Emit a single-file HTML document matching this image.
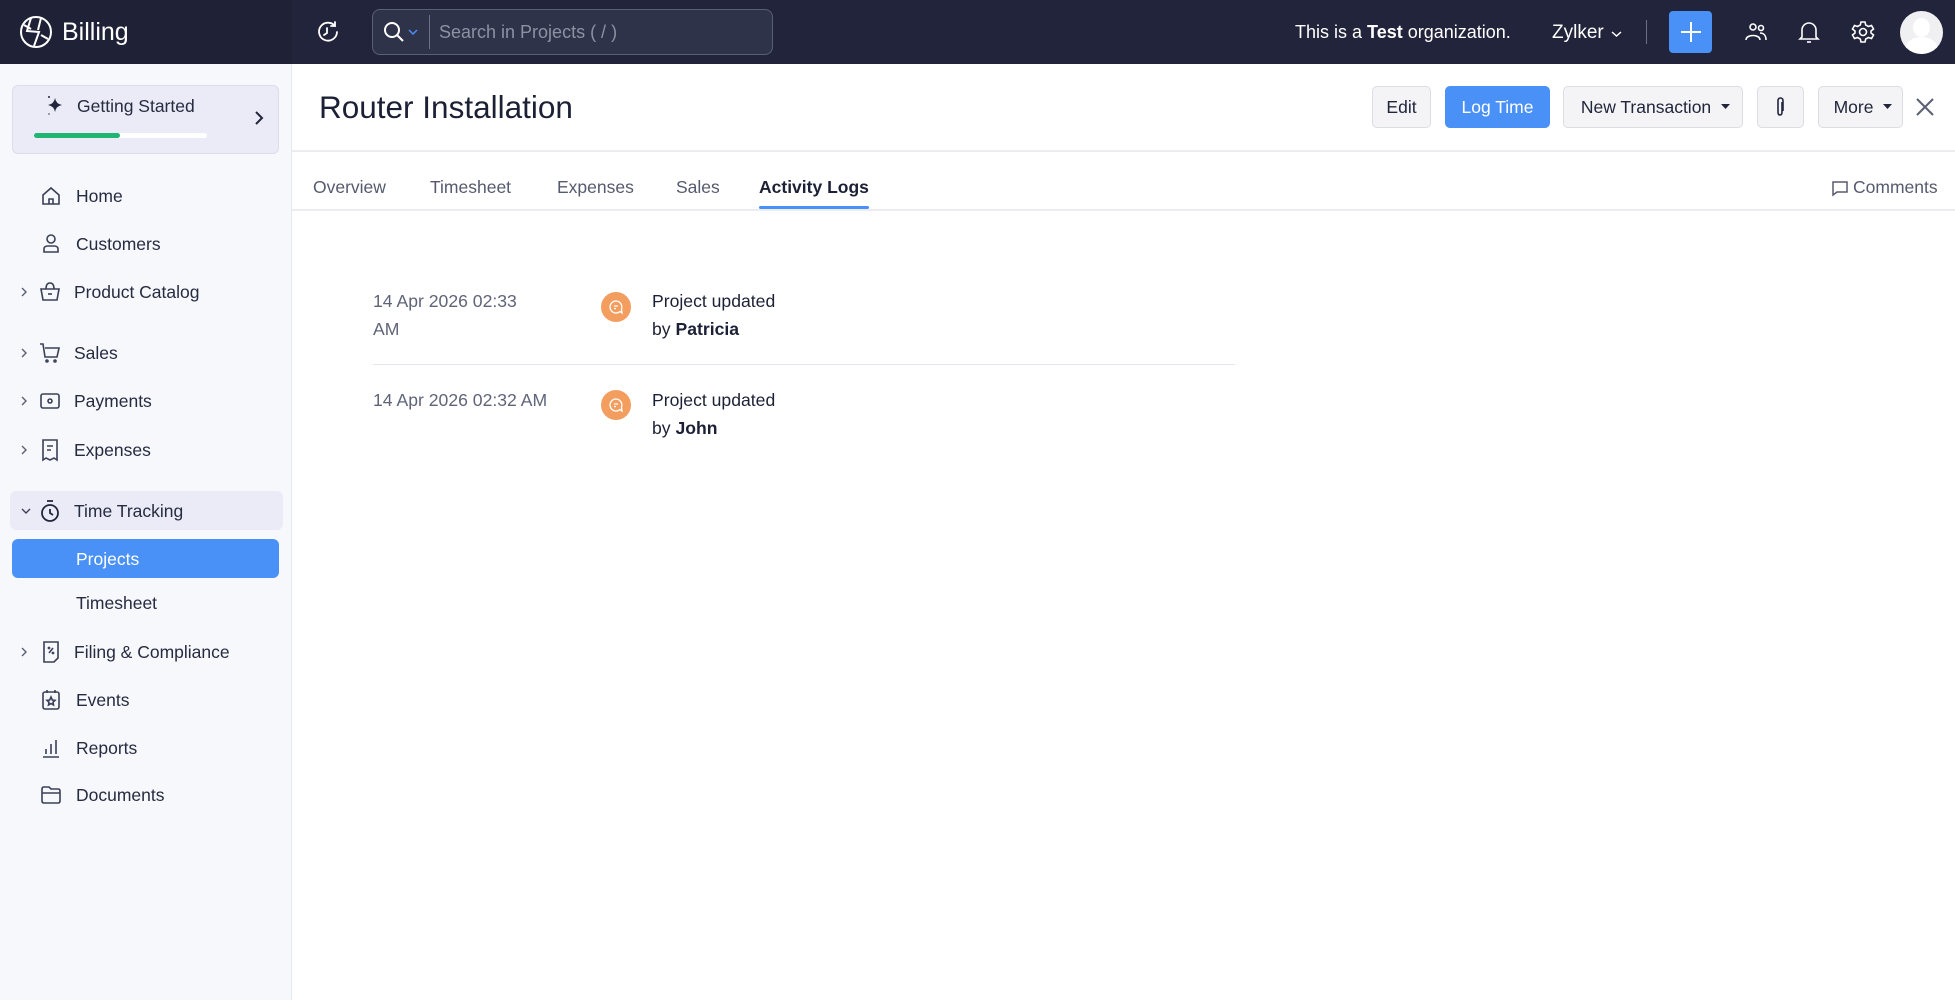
<!DOCTYPE html>
<html><head><meta charset="utf-8">
<style>
*{box-sizing:border-box;margin:0;padding:0}
body{width:1955px;height:1000px;overflow:hidden;background:#fff;font-family:"Liberation Sans",Arial,sans-serif;color:#21263c;position:relative}
.a{position:absolute}
.top{left:0;top:0;width:1955px;height:64px;background:#21243a}
.sbtop{left:0;top:0;width:292px;height:64px;background:#1f2236}
.side{left:0;top:64px;width:292px;height:936px;background:#f7f8fc;border-right:1px solid #e6e8f0}
.nav{position:absolute;left:0;font-size:17.5px;color:#262b40;line-height:24px}
.nav .t{position:absolute;left:76px;top:0;white-space:nowrap}
.nav svg{position:absolute}
.chev{position:absolute;left:20px;top:6px}
.btn{position:absolute;top:86px;height:42px;border:1px solid #dcdde3;background:#f4f4f6;border-radius:5px;font-size:17.5px;line-height:40px;text-align:center;color:#21263c}
.tab{position:absolute;top:177px;font-size:17.5px;color:#555a6e}
.row{font-size:17.6px;line-height:28px}
</style></head><body>
<div class="a top"></div>
<div class="a sbtop"></div>
<svg class="a" style="left:19px;top:15px" width="34" height="34" viewBox="0 0 34 34" fill="none" stroke="#fff" stroke-width="2"><circle cx="17" cy="17" r="15"/><path d="M12 3 L8 16 L20 17 L15 31"/><path d="M22 3 L19 15"/><path d="M5 10 L12 14"/><path d="M22 20 L29 24"/></svg>
<div class="a" style="left:62px;top:18px;color:#fff;font-size:25px">Billing</div>
<svg class="a" style="left:316px;top:20px" width="24" height="24" viewBox="0 0 24 24" fill="none" stroke="#fff" stroke-width="1.8" stroke-linecap="round"><path d="M19 6 A9 9 0 1 0 21 12"/><path d="M19 2 V6 H15"/><path d="M11 8 V13 L8 15"/></svg>
<div class="a" style="left:372px;top:9px;width:401px;height:46px;border:1px solid #5a5f78;border-radius:8px;background:#2f3349"></div>
<svg class="a" style="left:382px;top:20px" width="24" height="24" viewBox="0 0 24 24" fill="none" stroke="#fff" stroke-width="2"><circle cx="10" cy="10" r="7"/><path d="M15 15 L21 21"/></svg>
<svg class="a" style="left:408px;top:28px" width="10" height="8" viewBox="0 0 10 8" fill="none" stroke="#4b8df8" stroke-width="1.5"><path d="M1 2 L5 6 L9 2"/></svg>
<div class="a" style="left:429px;top:15px;width:1px;height:34px;background:#6b7088"></div>
<div class="a" style="left:439px;top:22px;color:#8d91a4;font-size:18px">Search in Projects ( / )</div>
<div class="a" style="left:1295px;top:22px;color:#fff;font-size:18px">This is a <b>Test</b> organization.</div>
<div class="a" style="left:1552px;top:22px;color:#fff;font-size:19px">Zylker</div>
<svg class="a" style="left:1611px;top:30px" width="11" height="8" viewBox="0 0 11 8" fill="none" stroke="#fff" stroke-width="1.5"><path d="M1 2 L5.5 6 L10 2"/></svg>
<div class="a" style="left:1646px;top:20px;width:1px;height:24px;background:#6b7088"></div>
<div class="a" style="left:1669px;top:11px;width:43px;height:42px;background:#4990f7;border-radius:4px"></div>
<svg class="a" style="left:1679px;top:20px" width="24" height="24" viewBox="0 0 24 24" stroke="#fff" stroke-width="2"><path d="M12 2 V22 M2 12 H22"/></svg>
<svg class="a" style="left:1744px;top:20px" width="24" height="24" viewBox="0 0 24 24" fill="none" stroke="#fff" stroke-width="1.6"><circle cx="9" cy="7" r="3"/><circle cx="17" cy="8" r="2.5"/><path d="M2 20 C2 14 16 14 16 20"/><path d="M16 13 C20 13 22 16 22 20"/></svg>
<svg class="a" style="left:1797px;top:19px" width="24" height="26" viewBox="0 0 24 26" fill="none" stroke="#fff" stroke-width="1.6"><path d="M5 18 V11 A7 7 0 0 1 19 11 V18 L21 20 H3 Z"/><path d="M10 23 H14"/></svg>
<svg class="a" style="left:1851px;top:20px" width="24" height="24" viewBox="0 0 24 24" fill="none" stroke="#fff" stroke-width="1.6"><circle cx="12" cy="12" r="3.5"/><path d="M10 2 H14 L14.7 5 L17.5 6.5 L20.5 5.5 L22.5 9 L20 11 V13 L22.5 15 L20.5 18.5 L17.5 17.5 L14.7 19 L14 22 H10 L9.3 19 L6.5 17.5 L3.5 18.5 L1.5 15 L4 13 V11 L1.5 9 L3.5 5.5 L6.5 6.5 L9.3 5 Z"/></svg>
<div class="a" style="left:1900px;top:11px;width:43px;height:43px;border-radius:50%;background:#f0f0f3;overflow:hidden"><div class="a" style="left:13px;top:7px;width:17px;height:19px;border-radius:50%;background:#fff"></div><div class="a" style="left:5px;top:26px;width:33px;height:24px;border-radius:50% 50% 0 0;background:#fff"></div></div>

<div class="a side"></div>
<div class="a" style="left:12px;top:85px;width:267px;height:69px;background:#ebebf7;border:1px solid #dcdcea;border-radius:6px"></div>
<svg class="a" style="left:42px;top:93px" width="24" height="24" viewBox="0 0 24 24" fill="#21263c"><path d="M13 5 Q14 11 20 12 Q14 13 13 19 Q12 13 6 12 Q12 11 13 5Z"/><circle cx="7" cy="4" r="1"/><circle cx="7" cy="21" r=".7"/></svg>
<div class="a" style="left:77px;top:96px;font-size:17.5px;color:#262b40">Getting Started</div>
<svg class="a" style="left:254px;top:110px" width="10" height="16" viewBox="0 0 10 16" fill="none" stroke="#21263c" stroke-width="2"><path d="M2 2 L8 8 L2 14"/></svg>
<div class="a" style="left:34px;top:133px;width:173px;height:5px;background:#fff;border-radius:3px"></div>
<div class="a" style="left:34px;top:133px;width:86px;height:5px;background:#21b573;border-radius:3px"></div>

<div class="a" style="left:10px;top:491px;width:273px;height:39px;background:#ebebf7;border-radius:6px"></div>
<div class="a" style="left:12px;top:539px;width:267px;height:39px;background:#4990f7;border-radius:6px"></div>

<div class="nav" style="top:184px"><svg style="left:40px;top:1px" width="22" height="22" viewBox="0 0 22 22" fill="none" stroke="#3b4058" stroke-width="1.6"><path d="M3 10 L11 3 L19 10 V19 H3 Z"/><path d="M9 19 V14 H13 V19"/></svg><span class="t">Home</span></div>
<div class="nav" style="top:232px"><svg style="left:40px;top:1px" width="22" height="22" viewBox="0 0 22 22" fill="none" stroke="#3b4058" stroke-width="1.6"><circle cx="11" cy="6" r="4"/><path d="M4 19 V16 Q4 13 8 13 H14 Q18 13 18 16 V19 Z"/></svg><span class="t">Customers</span></div>
<div class="nav" style="top:280px"><svg class="chev" width="8" height="12" viewBox="0 0 8 12" fill="none" stroke="#5a5f73" stroke-width="1.4"><path d="M2 2 L6 6 L2 10"/></svg><svg style="left:38px;top:1px" width="24" height="22" viewBox="0 0 24 22" fill="none" stroke="#3b4058" stroke-width="1.6"><path d="M3 8 H21 L19 19 H5 Z"/><path d="M8 8 Q8 2 12 2 Q16 2 16 8"/><path d="M10 13 H14"/></svg><span class="t" style="left:74px">Product Catalog</span></div>
<div class="nav" style="top:341px"><svg class="chev" width="8" height="12" viewBox="0 0 8 12" fill="none" stroke="#5a5f73" stroke-width="1.4"><path d="M2 2 L6 6 L2 10"/></svg><svg style="left:38px;top:0px" width="24" height="24" viewBox="0 0 24 24" fill="none" stroke="#3b4058" stroke-width="1.6"><path d="M2 3 H5 L7 16 H19 L21 7 H7"/><circle cx="9" cy="20" r="1"/><circle cx="17" cy="20" r="1"/></svg><span class="t" style="left:74px">Sales</span></div>
<div class="nav" style="top:389px"><svg class="chev" width="8" height="12" viewBox="0 0 8 12" fill="none" stroke="#5a5f73" stroke-width="1.4"><path d="M2 2 L6 6 L2 10"/></svg><svg style="left:38px;top:1px" width="24" height="22" viewBox="0 0 24 22" fill="none" stroke="#3b4058" stroke-width="1.6"><rect x="3" y="4" width="18" height="14" rx="2"/><circle cx="12" cy="11" r="2"/></svg><span class="t" style="left:74px">Payments</span></div>
<div class="nav" style="top:438px"><svg class="chev" width="8" height="12" viewBox="0 0 8 12" fill="none" stroke="#5a5f73" stroke-width="1.4"><path d="M2 2 L6 6 L2 10"/></svg><svg style="left:39px;top:0px" width="22" height="24" viewBox="0 0 22 24" fill="none" stroke="#3b4058" stroke-width="1.6"><path d="M4 2 H18 V22 L15 20 L11 22 L7 20 L4 22 Z"/><path d="M8 8 H14 M8 12 H12"/></svg><span class="t" style="left:74px">Expenses</span></div>
<div class="nav" style="top:499px"><svg class="chev" style="top:8px" width="12" height="8" viewBox="0 0 12 8" fill="none" stroke="#3b4058" stroke-width="1.4"><path d="M2 2 L6 6 L10 2"/></svg><svg style="left:38px;top:0px" width="24" height="24" viewBox="0 0 24 24" fill="none" stroke="#21263c" stroke-width="1.8"><circle cx="12" cy="14" r="8"/><path d="M9 2 H15 M12 10 V14 L15 16"/></svg><span class="t" style="left:74px">Time Tracking</span></div>
<div class="nav" style="top:547px;color:#fff"><span class="t">Projects</span></div>
<div class="nav" style="top:591px"><span class="t">Timesheet</span></div>
<div class="nav" style="top:640px"><svg class="chev" width="8" height="12" viewBox="0 0 8 12" fill="none" stroke="#5a5f73" stroke-width="1.4"><path d="M2 2 L6 6 L2 10"/></svg><svg style="left:40px;top:0px" width="22" height="24" viewBox="0 0 22 24" fill="none" stroke="#3b4058" stroke-width="1.6"><path d="M4 2 H18 V18 L14 22 H4 Z"/><path d="M9 13 L13 8"/><circle cx="9" cy="8" r=".6"/><circle cx="13" cy="13" r=".6"/></svg><span class="t" style="left:74px">Filing &amp; Compliance</span></div>
<div class="nav" style="top:688px"><svg style="left:40px;top:0px" width="22" height="24" viewBox="0 0 22 24" fill="none" stroke="#3b4058" stroke-width="1.6"><rect x="3" y="4" width="16" height="17" rx="2"/><path d="M7 2 V5 M15 2 V5"/><path d="M11 9 L12.3 12 L15 12.3 L13 14.3 L13.5 17 L11 15.6 L8.5 17 L9 14.3 L7 12.3 L9.7 12 Z"/></svg><span class="t">Events</span></div>
<div class="nav" style="top:736px"><svg style="left:40px;top:0px" width="22" height="24" viewBox="0 0 22 24" fill="none" stroke="#3b4058" stroke-width="1.6"><path d="M3 21 H19 M6 18 V13 M11 18 V8 M16 18 V4"/></svg><span class="t">Reports</span></div>
<div class="nav" style="top:783px"><svg style="left:40px;top:1px" width="22" height="22" viewBox="0 0 22 22" fill="none" stroke="#3b4058" stroke-width="1.6"><path d="M2 5 Q2 3 4 3 H9 L11 5 H18 Q20 5 20 7 V17 Q20 19 18 19 H4 Q2 19 2 17 Z"/><path d="M2 9 H20"/></svg><span class="t">Documents</span></div>

<div class="a" style="left:319px;top:89px;font-size:31.5px;color:#1c2035">Router Installation</div>
<div class="btn" style="left:1372px;width:59px">Edit</div>
<div class="btn" style="left:1445px;width:105px;background:#4990f7;border-color:#4990f7;color:#fff">Log Time</div>
<div class="btn" style="left:1563px;width:180px;padding-right:14px">New Transaction</div>
<svg class="a" style="left:1721px;top:104px" width="9" height="6" viewBox="0 0 9 6"><path d="M0 0 H9 L4.5 5Z" fill="#21263c"/></svg>
<div class="btn" style="left:1757px;width:47px"></div>
<svg class="a" style="left:1774px;top:96px" width="12" height="22" viewBox="0 0 12 22" fill="none" stroke="#21263c" stroke-width="1.6"><path d="M8 6 V16 Q8 19 6 19 Q4 19 4 16 V5 Q4 2 6.5 2 Q9 2 9 5 V15"/></svg>
<div class="btn" style="left:1818px;width:85px;padding-right:14px">More</div>
<svg class="a" style="left:1883px;top:104px" width="9" height="6" viewBox="0 0 9 6"><path d="M0 0 H9 L4.5 5Z" fill="#21263c"/></svg>
<svg class="a" style="left:1915px;top:97px" width="20" height="20" viewBox="0 0 20 20" stroke="#5a5f73" stroke-width="2"><path d="M2 2 L18 18 M18 2 L2 18"/></svg>
<div class="a" style="left:292px;top:150px;width:1663px;height:2px;background:#ebebf0"></div>

<div class="tab" style="left:313px">Overview</div>
<div class="tab" style="left:430px">Timesheet</div>
<div class="tab" style="left:557px">Expenses</div>
<div class="tab" style="left:676px">Sales</div>
<div class="tab" style="left:759px;color:#1c2035;font-weight:bold">Activity Logs</div>
<div class="a" style="left:759px;top:206px;width:110px;height:3px;background:#4990f7;border-radius:2px"></div>
<svg class="a" style="left:1831px;top:179px" width="18" height="18" viewBox="0 0 18 18" fill="none" stroke="#555a6e" stroke-width="1.5"><path d="M2 3 H16 V13 H6 L2 16 Z"/></svg>
<div class="a" style="left:1853px;top:177px;font-size:17.5px;color:#555a6e">Comments</div>
<div class="a" style="left:292px;top:209px;width:1663px;height:2px;background:#ebebf0"></div>

<div class="a row" style="left:373px;top:287px;color:#5f6478">14 Apr 2026 02:33<br>AM</div>
<div class="a" style="left:601px;top:292px;width:30px;height:30px;border-radius:50%;background:#f39e5f"></div>
<svg class="a" style="left:608px;top:299px" width="16" height="16" viewBox="0 0 16 16" fill="none" stroke="#fff" stroke-width="1.3"><path d="M8 2 A6 6 0 1 0 12 12.5 L14 14 L13.5 10 A6 6 0 0 0 8 2Z"/><path d="M6 7 H10 M6 9.5 H8"/></svg>
<div class="a row" style="left:652px;top:287px;color:#1c2035">Project updated<br>by <b>Patricia</b></div>
<div class="a" style="left:373px;top:364px;width:862px;height:1px;background:#e6e7ee"></div>
<div class="a row" style="left:373px;top:386px;color:#5f6478">14 Apr 2026 02:32 AM</div>
<div class="a" style="left:601px;top:390px;width:30px;height:30px;border-radius:50%;background:#f39e5f"></div>
<svg class="a" style="left:608px;top:397px" width="16" height="16" viewBox="0 0 16 16" fill="none" stroke="#fff" stroke-width="1.3"><path d="M8 2 A6 6 0 1 0 12 12.5 L14 14 L13.5 10 A6 6 0 0 0 8 2Z"/><path d="M6 7 H10 M6 9.5 H8"/></svg>
<div class="a row" style="left:652px;top:386px;color:#1c2035">Project updated<br>by <b>John</b></div>
</body></html>
